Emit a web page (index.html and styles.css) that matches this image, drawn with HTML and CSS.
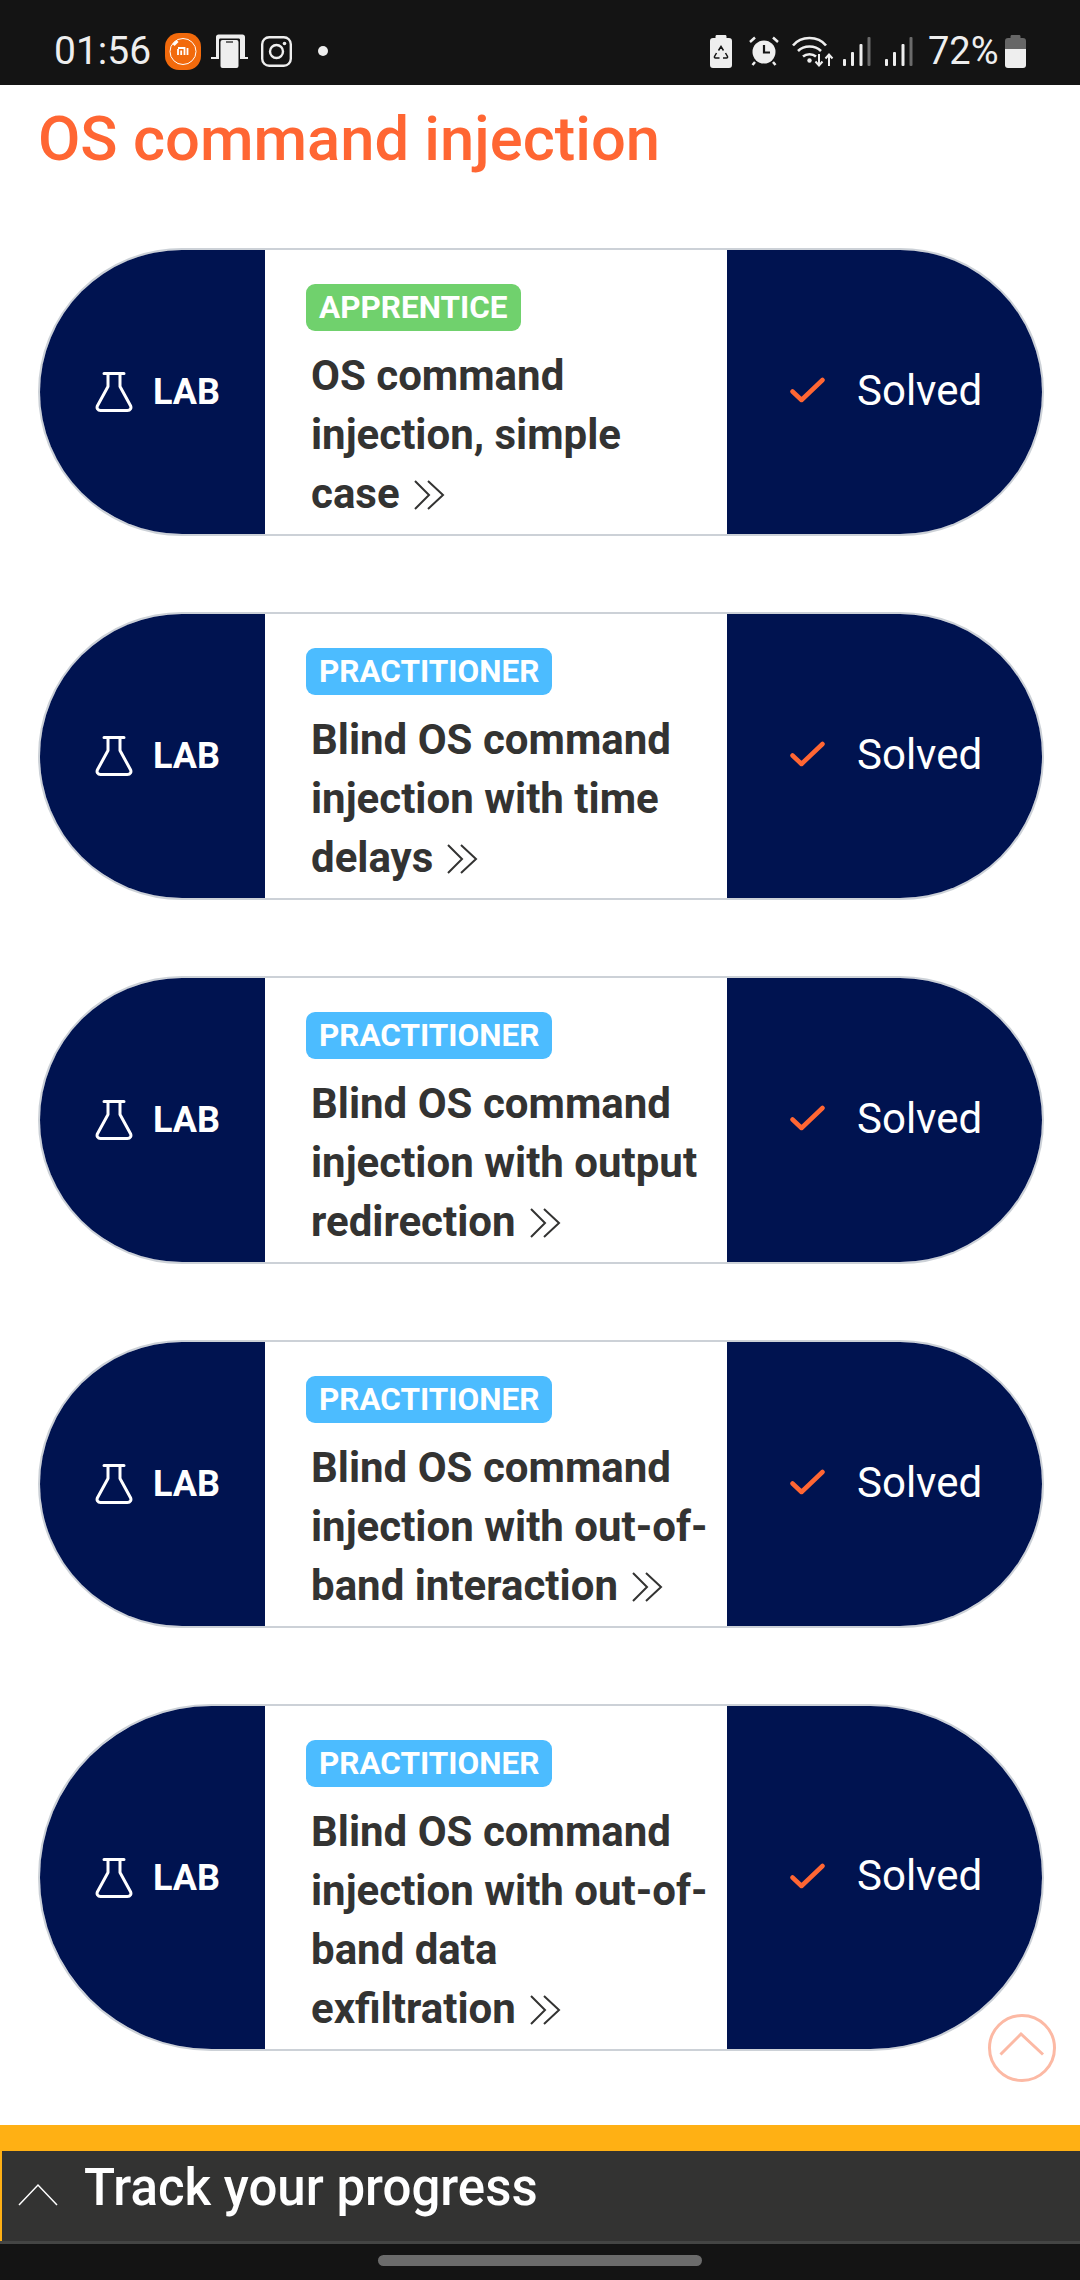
FILE: index.html
```html
<!doctype html>
<html lang="en">
<head>
  <meta charset="utf-8">
  <title>OS command injection</title>
  <meta name="viewport" content="width=device-width, initial-scale=1">
  <link rel="stylesheet" href="styles.css">
</head>

<body>

  <svg class="sprites" width="0" height="0">
    <symbol id="flask" viewBox="0 0 38 40">
      <path d="M9 1.500h20M13 1.500v13L2.600 33.500c-1.400 2.600.2 5 3 5h26.800c2.800 0 4.400-2.400 3-5L25 14.500v-13" fill="none" stroke="#fff" stroke-width="3" stroke-linejoin="round" stroke-linecap="round"/>
    </symbol>
    <symbol id="check" viewBox="0 0 35 26">
      <path d="M2.500 14.500l9 8.500L32.500 3" fill="none" stroke="#ff6633" stroke-width="4.500" stroke-linecap="round" stroke-linejoin="round"/>
    </symbol>
    <symbol id="chevrons" viewBox="0 0 32 30">
      <path d="M1 1l14 14L1 29M14 1l15 14-15 14" fill="none" stroke="#333332" stroke-width="2"/>
    </symbol>
  </svg>

  <header class="status-bar">
    <div class="status-left">
      <span class="status-time">01:56</span>
      <svg class="ic-mi" width="36" height="37" viewBox="0 0 36 37">
        <rect x="0" y="0" width="36" height="37" rx="14" fill="#f26a0c"/>
        <circle cx="18" cy="18.500" r="13" fill="none" stroke="#fff" stroke-width="1"/>
        <path d="M8.500 12l4-4" stroke="#fff" stroke-width="3" fill="none"/>
        <path d="M13 15h6.500v7M16.200 17.500v4.500M13 16v6M22.500 15v7" stroke="#fff" stroke-width="1.800" fill="none"/>
      </svg>
      <svg class="ic-cast" width="37" height="34" viewBox="0 0 37 34">
        <path d="M5 3c0-1.500 1-2.500 2.500-2.500h24C33 .500 34 1.500 34 3v22h-5V6c0-1-.500-1.500-1.500-1.500h-18C8.500 4.500 8 5 8 6v19H5z" fill="#eee"/>
        <path d="M0 23h8v2H0zM29 23h8v2h-8z" fill="#eee"/>
        <rect x="9.500" y="6" width="18" height="28" rx="2" fill="#eee"/>
        <path d="M15 8h7" stroke="#141414" stroke-width="1.200"/>
      </svg>
      <svg class="ic-insta" width="31" height="31" viewBox="0 0 31 31">
        <rect x="1.200" y="1.200" width="28.600" height="28.600" rx="7" fill="none" stroke="#eee" stroke-width="2.400"/>
        <circle cx="15.500" cy="15.500" r="6.500" fill="none" stroke="#eee" stroke-width="2.400"/>
        <circle cx="23.500" cy="7.500" r="1.800" fill="#eee"/>
      </svg>
      <span class="status-dot"></span>
    </div>
    <div class="status-right">
      <svg class="ic-batt-saver" width="22" height="33" viewBox="0 0 22 33">
        <path d="M7 0h8c1 0 1.500.500 1.500 1.500V3H19c2 0 3 1 3 3v24c0 2-1 3-3 3H3c-2 0-3-1-3-3V6c0-2 1-3 3-3h2.500V1.500C5.500.500 6 0 7 0z" fill="#eee"/>
        <path d="M8.500 15.500l2.500-4 2.500 4M15.500 18l2 3.500c.3.800-.2 1.500-1 1.500H13M9.500 23H5.500c-.8 0-1.300-.700-1-1.500l2-3.500" fill="none" stroke="#141414" stroke-width="1.500"/>
      </svg>
      <svg class="ic-alarm" width="30" height="30" viewBox="0 0 30 30">
        <circle cx="15" cy="16" r="11.500" fill="#eee"/>
        <path d="M1 6l5-4.500M29 6l-5-4.500M6 26l-2.500 3M24 26l2.500 3" stroke="#eee" stroke-width="2.500" fill="none"/>
        <path d="M15 9v7.500h6" stroke="#141414" stroke-width="2.200" fill="none"/>
      </svg>
      <svg class="ic-wifi" width="42" height="31" viewBox="0 0 42 31">
        <path d="M1 9.500C9-.500 26-.500 34 9.500M6 15c6-6 17-6 23 0M11 20.500c3.500-3 9.500-3 13 0" fill="none" stroke="#eee" stroke-width="2.600"/>
        <circle cx="17.500" cy="24.500" r="2.200" fill="#eee"/>
        <path d="M27 18v11M23.500 25.500l3.500 4 3.500-4M37 30V19.500M33.500 22.500l3.500-4 3.500 4" fill="none" stroke="#eee" stroke-width="2"/>
      </svg>
      <svg class="ic-signal" width="28" height="29" viewBox="0 0 28 29">
        <rect x="0" y="22" width="3" height="7" rx="1" fill="#eee"/>
        <rect x="8" y="15" width="3" height="14" rx="1" fill="#eee"/>
        <rect x="16.500" y="7" width="3" height="22" rx="1" fill="#eee"/>
        <rect x="24.500" y="0" width="3" height="29" rx="1" fill="#6b6b6b"/>
      </svg>
      <svg class="ic-signal ic-signal-2" width="28" height="29" viewBox="0 0 28 29">
        <rect x="0" y="22" width="3" height="7" rx="1" fill="#eee"/>
        <rect x="8" y="15" width="3" height="14" rx="1" fill="#eee"/>
        <rect x="16.500" y="7" width="3" height="22" rx="1" fill="#eee"/>
        <rect x="24.500" y="0" width="3" height="29" rx="1" fill="#6b6b6b"/>
      </svg>
      <span class="status-pct">72%</span>
      <svg class="ic-batt" width="21" height="33" viewBox="0 0 21 33">
        <path d="M7 0h7c1 0 1.500.500 1.500 1.500V3H18c2 0 3 1 3 3v8H0V6c0-2 1-3 3-3h2.500V1.500C5.500.500 6 0 7 0z" fill="#666"/>
        <path d="M0 14h21v16c0 2-1 3-3 3H3c-2 0-3-1-3-3z" fill="#eee"/>
      </svg>
    </div>
  </header>

  <main class="content">
    <h1 class="page-title">OS command injection</h1>

    <div class="lab-card">
      <div class="lab-tag"><svg class="flask"><use href="#flask"/></svg>LAB</div>
      <div class="lab-body">
        <span class="level level-apprentice">APPRENTICE</span>
        <a class="lab-title" href="#">OS command injection, simple <span class="last-word">case<svg class="chevrons"><use href="#chevrons"/></svg></span></a>
      </div>
      <div class="lab-status"><svg class="check"><use href="#check"/></svg>Solved</div>
    </div>

    <div class="lab-card">
      <div class="lab-tag"><svg class="flask"><use href="#flask"/></svg>LAB</div>
      <div class="lab-body">
        <span class="level level-practitioner">PRACTITIONER</span>
        <a class="lab-title" href="#">Blind OS command injection with time <span class="last-word">delays<svg class="chevrons"><use href="#chevrons"/></svg></span></a>
      </div>
      <div class="lab-status"><svg class="check"><use href="#check"/></svg>Solved</div>
    </div>

    <div class="lab-card">
      <div class="lab-tag"><svg class="flask"><use href="#flask"/></svg>LAB</div>
      <div class="lab-body">
        <span class="level level-practitioner">PRACTITIONER</span>
        <a class="lab-title" href="#">Blind OS command injection with output <span class="last-word">redirection<svg class="chevrons"><use href="#chevrons"/></svg></span></a>
      </div>
      <div class="lab-status"><svg class="check"><use href="#check"/></svg>Solved</div>
    </div>

    <div class="lab-card">
      <div class="lab-tag"><svg class="flask"><use href="#flask"/></svg>LAB</div>
      <div class="lab-body">
        <span class="level level-practitioner">PRACTITIONER</span>
        <a class="lab-title" href="#">Blind OS command injection with out-of-band <span class="last-word">interaction<svg class="chevrons"><use href="#chevrons"/></svg></span></a>
      </div>
      <div class="lab-status"><svg class="check"><use href="#check"/></svg>Solved</div>
    </div>

    <div class="lab-card">
      <div class="lab-tag"><svg class="flask"><use href="#flask"/></svg>LAB</div>
      <div class="lab-body">
        <span class="level level-practitioner">PRACTITIONER</span>
        <a class="lab-title" href="#">Blind OS command injection with out-of-band data <span class="last-word">exfiltration<svg class="chevrons"><use href="#chevrons"/></svg></span></a>
      </div>
      <div class="lab-status"><svg class="check"><use href="#check"/></svg>Solved</div>
    </div>

    <a class="to-top" href="#">
      <svg width="68" height="68" viewBox="0 0 68 68">
        <circle cx="34" cy="34" r="32.500" fill="none" stroke="#fcb9a4" stroke-width="3"/>
        <path d="M12.500 40.500L33 20l22 20.500" fill="none" stroke="#fcb9a4" stroke-width="3"/>
      </svg>
    </a>
  </main>

  <footer class="progress">
    <div class="progress-strip"></div>
    <div class="progress-bar">
      <svg class="progress-arrow" width="40" height="24" viewBox="0 0 40 24">
        <path d="M1 22L20 2l19 20" fill="none" stroke="#fff" stroke-width="1.500"/>
      </svg>
      <span class="progress-label">Track your progress</span>
    </div>
    <div class="nav-bar"><span class="home-pill"></span></div>
  </footer>

</body>
</html>
```

FILE: styles.css
```css
* {
  box-sizing:border-box;
}
html, body {
  margin:0;
  padding:0;
}
body {
  width:1080px;
  height:2280px;
  display:flex;
  flex-direction:column;
  background:#fff;
  font-family:Roboto, 'Liberation Sans', sans-serif;
  overflow:hidden;
}
.sprites {
  position:absolute;
}

/* status bar */
.status-bar {
  height:85px;
  flex:none;
  background:#141414;
  color:#eee;
  display:flex;
  justify-content:space-between;
  align-items:center;
  padding:17px 54px 0;
  font-size:38px;
}
.status-left,
.status-right {
  display:flex;
  align-items:center;
}
.status-time {
  width:111px;
  font-size:39px;
  line-height:40px;
}
.ic-cast {
  margin-left:10px;
}
.ic-insta {
  margin-left:13px;
}
.status-dot {
  width:10px;
  height:10px;
  border-radius:50%;
  background:#eee;
  margin-left:26px;
}
.ic-alarm {
  margin-left:17px;
}
.ic-wifi {
  margin-left:13px;
}
.ic-signal {
  margin-left:9px;
}
.ic-signal-2 {
  margin-left:14px;
}
.status-pct {
  margin-left:15px;
  width:77px;
  line-height:40px;
}

/* content */
.content {
  flex:1;
  position:relative;
  padding:24px 36px 0 38px;
}
.page-title {
  margin:0 0 79px;
  font-size:61.500px;
  line-height:60px;
  font-weight:500;
  color:#ff6633;
}

.lab-card {
  display:flex;
  border:2px solid #ccd1d7;
  border-radius:200px;
  overflow:hidden;
  margin-bottom:76px;
}
.lab-card:last-of-type {
  margin-bottom:0;
}
.lab-tag,
.lab-status {
  background:#001350;
  color:#fff;
  display:flex;
  align-items:center;
}
.lab-tag {
  width:225px;
  flex:none;
  padding-left:55px;
  font-size:36px;
  font-weight:700;
}
.flask {
  width:38px;
  height:40px;
  margin-right:20px;
}
.lab-body {
  flex:1;
  padding:34px 10px 11px 41px;
}
.level {
  display:inline-block;
  height:47px;
  line-height:47px;
  padding:0 13px;
  border-radius:9px;
  color:#fff;
  font-size:31.500px;
  font-weight:700;
  vertical-align:top;
}
.level-apprentice {
  background:#70d16d;
}
.level-practitioner {
  background:#4cbcff;
}
.lab-title {
  display:block;
  margin:15px 0 0 5px;
  font-size:42px;
  line-height:59px;
  font-weight:700;
  color:#333332;
  text-decoration:none;
}
.last-word {
  white-space:nowrap;
}
.chevrons {
  width:32px;
  height:30px;
  margin-left:14px;
  vertical-align:-2px;
}
.lab-status {
  width:315px;
  flex:none;
  padding:0 0 4px 63px;
  font-size:42px;
}
.check {
  width:35px;
  height:26px;
  margin-right:32px;
}

.to-top {
  position:absolute;
  right:24px;
  bottom:43px;
  width:68px;
  height:68px;
}

/* bottom */
.progress {
  flex:none;
}
.progress-strip {
  height:26px;
  background:#ffb014;
}
.progress-bar {
  height:90px;
  background:#333332;
  border-left:2px solid #ffb014;
  display:flex;
  align-items:center;
  color:#fff;
}
.progress-arrow {
  margin:0 26px 0 16px;
  position:relative;
  top:-1px;
}
.progress-label {
  font-size:51px;
  font-weight:500;
  position:relative;
  top:-9px;
}
.nav-bar {
  height:39px;
  border-top:3px solid #444544;
  background:#141414;
  display:flex;
  justify-content:center;
  padding-top:11px;
}
.home-pill {
  width:324px;
  height:11px;
  border-radius:6px;
  background:#6b6b6b;
}
```
